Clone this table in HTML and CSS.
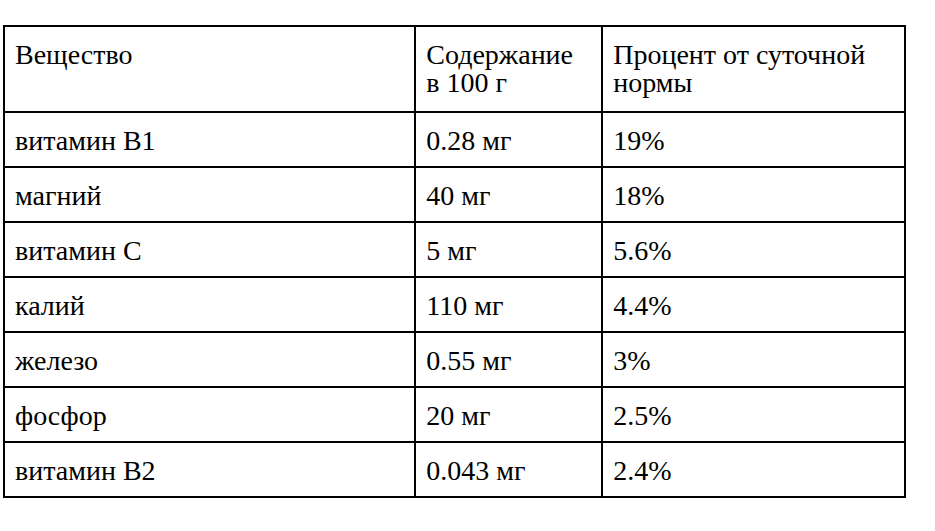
FILE: index.html
```html
<!DOCTYPE html>
<html lang="ru">
<head>
<meta charset="utf-8">
<link rel="stylesheet" href="styles.css">
</head>
<body>
<table class="nutri">
  <colgroup>
    <col class="c1">
    <col class="c2">
    <col class="c3">
  </colgroup>
  <thead>
    <tr class="head">
      <th>Вещество</th>
      <th>Содержание<br>в 100 г</th>
      <th>Процент от суточной<br>нормы</th>
    </tr>
  </thead>
  <tbody>
    <tr><td>витамин B1</td><td>0.28 мг</td><td>19%</td></tr>
    <tr><td>магний</td><td>40 мг</td><td>18%</td></tr>
    <tr><td>витамин C</td><td>5 мг</td><td>5.6%</td></tr>
    <tr><td>калий</td><td>110 мг</td><td>4.4%</td></tr>
    <tr><td>железо</td><td>0.55 мг</td><td>3%</td></tr>
    <tr><td>фосфор</td><td>20 мг</td><td>2.5%</td></tr>
    <tr><td>витамин B2</td><td>0.043 мг</td><td>2.4%</td></tr>
  </tbody>
</table>
</body>
</html>
```

FILE: styles.css
```css
html, body {
  margin: 0;
  padding: 0;
  background: #ffffff;
}
body {
  padding: 25px 0 0 3px;
  font-family: "Liberation Serif", "DejaVu Serif", serif;
  color: #000000;
}
.nutri {
  border-collapse: collapse;
  width: 903px;
  font-family: "Liberation Serif", "DejaVu Serif", serif;
  font-size: 28px;
  line-height: 28px;
}
.c1 { width: 413px; }
.c2 { width: 187px; }
.c3 { width: 303px; }
.nutri th,
.nutri td {
  border: 2px solid #000000;
  text-align: left;
  font-weight: normal;
  vertical-align: top;
  white-space: nowrap;
}
.nutri th {
  padding: 14px 10px 14px 10px;
}
.nutri td {
  padding: 14px 10px 11px 10px;
}
```
